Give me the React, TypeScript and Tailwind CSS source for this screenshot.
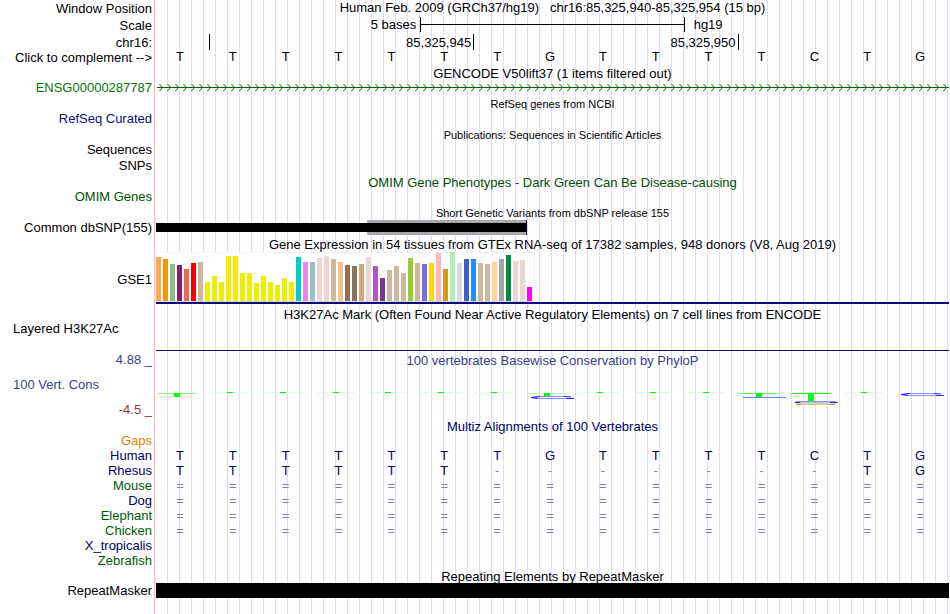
import type { ReactNode } from "react";

const GUIDES =
  "bg-[repeating-linear-gradient(to_right,transparent_0,transparent_11px,#dcdcff_11px,#dcdcff_12px)]";

type TrackProps = {
  label?: ReactNode;
  labelClass?: string;
  className?: string;
  children?: ReactNode;
};

function Track({ label, labelClass = "text-right", className = "", children }: TrackProps) {
  return (
    <section className={`flex shrink-0 ${className}`}>
      <div className={`mr-px w-[155px] shrink-0 border-r border-[#ffb4b4] pr-0.5 ${labelClass}`}>{label}</div>
      <div className={`min-w-0 flex-1 ${GUIDES}`}>{children}</div>
    </section>
  );
}

function Title({ className = "", children }: { className?: string; children: ReactNode }) {
  return <h2 className={`text-center ${className}`}>{children}</h2>;
}

function SmallTitle({ children }: { children: ReactNode }) {
  return <h2 className="pt-0.5 text-center text-[11px]">{children}</h2>;
}

function Bases({ sequence }: { sequence: string }) {
  return (
    <div className="grid grid-cols-15">
      {sequence.split("").map((base, i) => (
        <span
          key={i}
          className={`pr-[5px] text-center ${base === "=" || base === "-" ? "text-[#8080b8]" : ""}`}
        >
          {base}
        </span>
      ))}
    </div>
  );
}

const TISSUES: [string, number][] = [
  ["#ffa54f", 44], ["#ee9a00", 42], ["#8fbc8f", 37], ["#8b1c62", 36], ["#ee6a50", 32], ["#ff0000", 38],
  ["#cdb79e", 39], ["#eeee00", 19], ["#eeee00", 25], ["#eeee00", 19], ["#eeee00", 45], ["#eeee00", 45],
  ["#eeee00", 28], ["#eeee00", 28], ["#eeee00", 18], ["#eeee00", 25], ["#eeee00", 19], ["#eeee00", 16],
  ["#eeee00", 23], ["#eeee00", 19], ["#00cdcd", 44], ["#ee82ee", 39], ["#9ac0cd", 39], ["#eed5d2", 43],
  ["#eed5d2", 45], ["#cdb79e", 42], ["#eec591", 39], ["#8b7355", 36], ["#8b7355", 35], ["#cdaa7d", 37],
  ["#eed5d2", 44], ["#b452cd", 35], ["#7a378b", 23], ["#cdb79e", 31], ["#cdb79e", 35], ["#cdb79e", 28],
  ["#9acd32", 43], ["#cdb79e", 38], ["#7a67ee", 37], ["#ffd700", 38], ["#ffb6c1", 48], ["#cd9b1d", 32],
  ["#b4eeb4", 49], ["#d9d9d9", 38], ["#3a5fcd", 42], ["#1e90ff", 42], ["#cdb79e", 38], ["#cdb79e", 37],
  ["#ffd39b", 39], ["#a6a6a6", 42], ["#008b45", 46], ["#eed5d2", 40], ["#eed5d2", 41], ["#ff00ff", 14],
];

function ExpressionBars() {
  return (
    <div className="flex h-[50px] w-[379px] items-end border-t border-r border-b border-t-[#f0f0f0] border-r-[#f0f0f0] border-b-[#d8d8d8] bg-white">
      {TISSUES.map(([color, height], i) => (
        <div key={i} className="mr-0.5 w-[5px] shrink-0" style={{ backgroundColor: color, height }} />
      ))}
    </div>
  );
}

function GeneLine() {
  return (
    <svg className="block h-[15px] w-full" aria-hidden="true">
      <defs>
        <pattern id="strand" width="8" height="15" patternUnits="userSpaceOnUse">
          <path d="M3.5 4 L6.5 7.5 L3.5 11" fill="none" stroke="#006400" />
        </pattern>
      </defs>
      <rect x="1" y="7" width="100%" height="1" fill="#006400" />
      <rect x="1" width="100%" height="15" fill="url(#strand)" />
    </svg>
  );
}

type Score = { bar?: string; stemTop?: number; stem?: number; flat?: boolean; loop?: number; tail?: boolean };

const FAINT: Score = { bar: "#dcffdc", stemTop: 2, stem: 1 };

const SCORES: Score[] = [
  { bar: "#80ff80", stemTop: 3, stem: 4 },
  FAINT, FAINT, FAINT, FAINT, FAINT, FAINT,
  { bar: "#b4ffb4", stemTop: 3, stem: 3, loop: 6 },
  FAINT, FAINT, FAINT,
  { bar: "#50ff50", stemTop: 3, stem: 4, flat: true },
  { bar: "#00ff00", stemTop: 3, stem: 8, loop: 11, tail: true },
  FAINT,
  { loop: 3 },
];

function ScoreGlyph({ score }: { score: Score }) {
  const { bar, stemTop = 0, stem = 0, flat, loop, tail } = score;
  return (
    <svg width="50" height="16" viewBox="0 0 50 16" aria-hidden="true">
      {bar && <rect x="2" y={stemTop} width="38" height="1" fill={bar} />}
      {bar && <rect x="18" y={stemTop} width="6" height={stem} fill="#00ff00" />}
      {flat && <rect x="5" y="7" width="43" height="1" fill="#7878ff" />}
      {loop !== undefined && !tail && (
        <g transform={`translate(5 ${loop})`} fill="none" stroke="#2828ff">
          <path d="M36 0.5 L8 0.5 Q1 1 1 1.5 T8 2.5 L36 2.5" stroke="#8c8cff" />
          <path d="M9 0.5 L0 1.5 L7 2.5 M33 0.5 L40 1 M35 2.5 H43" />
        </g>
      )}
      {loop !== undefined && tail && (
        <g transform={`translate(5 ${loop})`}>
          <rect x="1" y="0" width="40" height="1" fill="#9696ff" />
          <rect x="0" y="1" width="37" height="1" fill="#b8b8ff" />
          <rect x="0" y="1" width="5" height="1" fill="#2828ff" />
          <rect x="35" y="1" width="8" height="1" fill="#2828ff" />
          <rect x="1" y="2" width="40" height="1" fill="#d8d8b4" />
          <rect x="1" y="3" width="38" height="1" fill="#d0cc80" />
          <rect x="1" y="3" width="6" height="1" fill="#b4aa3c" />
          <rect x="34" y="3" width="6" height="1" fill="#b4aa3c" />
        </g>
      )}
    </svg>
  );
}

const SPECIES = [
  { name: "Gaps", color: "text-[#e68200]", sequence: "" },
  { name: "Human", color: "text-[#000064]", sequence: "TTTTTTTGTTTTCTG" },
  { name: "Rhesus", color: "text-[#000064]", sequence: "TTTTTT-------TG" },
  { name: "Mouse", color: "text-[#005a0a]", sequence: "===============" },
  { name: "Dog", color: "text-[#000064]", sequence: "===============" },
  { name: "Elephant", color: "text-[#005a0a]", sequence: "===============" },
  { name: "Chicken", color: "text-[#005a0a]", sequence: "===============" },
  { name: "X_tropicalis", color: "text-[#000064]", sequence: "" },
  { name: "Zebrafish", color: "text-[#005a0a]", sequence: "" },
];

export default function App() {
  return (
    <main className="flex min-h-screen flex-col bg-white pr-px font-['Liberation_Sans',Arial,sans-serif] text-[13px] leading-[15px] whitespace-nowrap text-black">
      <Track className="h-[17px]" label="Window Position" labelClass="pt-px text-right">
        <h1 className="text-center whitespace-pre">
          {"Human Feb. 2009 (GRCh37/hg19)   chr16:85,325,940-85,325,954 (15 bp)"}
        </h1>
      </Track>
      <Track className="h-[17px]" label="Scale" labelClass="pt-px text-right">
        <div className="grid h-[15px] grid-cols-3">
          <span className="pr-1 text-right">5 bases</span>
          <div className="flex items-center border-x border-black">
            <div className="h-px w-full bg-black" />
          </div>
          <span className="pl-[9px]">hg19</span>
        </div>
      </Track>
      <Track className="h-[15px]" label="chr16:" labelClass="pt-px text-right">
        <div className="grid h-[15px] grid-cols-[1fr_5fr_5fr_4fr] text-right">
          <span />
          <span className="border-l border-black pt-px pr-0.5">85,325,945</span>
          <span className="border-l border-black pt-px pr-0.5">85,325,950</span>
          <span className="border-l border-black" />
        </div>
      </Track>
      <Track
        className="h-[17px]"
        label={<button type="button" className="block w-full text-right">{"Click to complement -->"}</button>}
        labelClass="pt-px"
      >
        <Bases sequence="TTTTTTTGTTTTCTG" />
      </Track>

      <Track className="h-[14px]">
        <Title>GENCODE V50lift37 (1 items filtered out)</Title>
      </Track>
      <Track className="h-[15px]" label="ENSG00000287787" labelClass="text-right text-[#007800]">
        <GeneLine />
      </Track>

      <Track className="h-4">
        <SmallTitle>RefSeq genes from NCBI</SmallTitle>
      </Track>
      <Track className="h-[15px]" label="RefSeq Curated" labelClass="text-right text-[#0c0c78]" />

      <Track className="h-4">
        <SmallTitle>Publications: Sequences in Scientific Articles</SmallTitle>
      </Track>
      <Track className="h-4" label="Sequences" />
      <Track className="h-[17px]" label="SNPs" />

      <Track className="h-[14px]">
        <Title className="text-[#005000]">OMIM Gene Phenotypes - Dark Green Can Be Disease-causing</Title>
      </Track>
      <Track className="h-[15px]" label="OMIM Genes" labelClass="text-right text-[#005000]" />

      <Track className="h-4">
        <SmallTitle>Short Genetic Variants from dbSNP release 155</SmallTitle>
      </Track>
      <Track className="h-[17px]" label="Common dbSNP(155)">
        <div className="grid h-[15px] grid-cols-15 items-center">
          <div className="col-span-4 h-[9px] bg-black" />
          <div className="col-span-3 h-[15px] border-y-[3px] border-[#a9a9a9] bg-black" />
          <div className="col-span-8 h-[15px] border-l border-black" />
        </div>
      </Track>

      <Track className="h-[15px]">
        <Title>Gene Expression in 54 tissues from GTEx RNA-seq of 17382 samples, 948 donors (V8, Aug 2019)</Title>
      </Track>
      <Track className="h-[52px]" label="GSE1" labelClass="pt-5 text-right">
        <div className="border-b-2 border-[#0c0c78]">
          <ExpressionBars />
        </div>
      </Track>

      <Track className="h-[17px]">
        <Title className="pt-[3px]">
          H3K27Ac Mark (Often Found Near Active Regulatory Elements) on 7 cell lines from ENCODE
        </Title>
      </Track>
      <Track className="h-[30px]" label="Layered H3K27Ac" labelClass="pl-[13px] text-left">
        <div className="h-full border-b border-[#0c0c60]" />
      </Track>

      <Track
        className="h-[68px]"
        labelClass="flex flex-col gap-[10px] pt-px text-[#3c3c8c]"
        label={
          <>
            <span className="text-right">4.88 _</span>
            <span className="pl-[13px]">100 Vert. Cons</span>
            <span className="text-right text-[#8c3c3c]">-4.5 _</span>
          </>
        }
      >
        <Title className="pt-0.5 text-[#3c3c8c]">100 vertebrates Basewise Conservation by PhyloP</Title>
        <div className="grid grid-cols-15 pt-[22px]">
          {SCORES.map((score, i) => (
            <ScoreGlyph key={i} score={score} />
          ))}
        </div>
      </Track>

      <Track className="h-[14px]">
        <Title className="text-[#000064]">Multiz Alignments of 100 Vertebrates</Title>
      </Track>
      {SPECIES.map(({ name, color, sequence }) => (
        <Track key={name} className="h-[15px]" label={name} labelClass={`text-right ${color}`}>
          <div className="text-[#000064]">
            <Bases sequence={sequence} />
          </div>
        </Track>
      ))}

      <Track className="h-[15px]">
        <Title className="pt-px">Repeating Elements by RepeatMasker</Title>
      </Track>
      <Track className="h-[15px]" label="RepeatMasker">
        <div className="h-[15px] bg-black" />
      </Track>
      <Track className="grow" />
    </main>
  );
}
